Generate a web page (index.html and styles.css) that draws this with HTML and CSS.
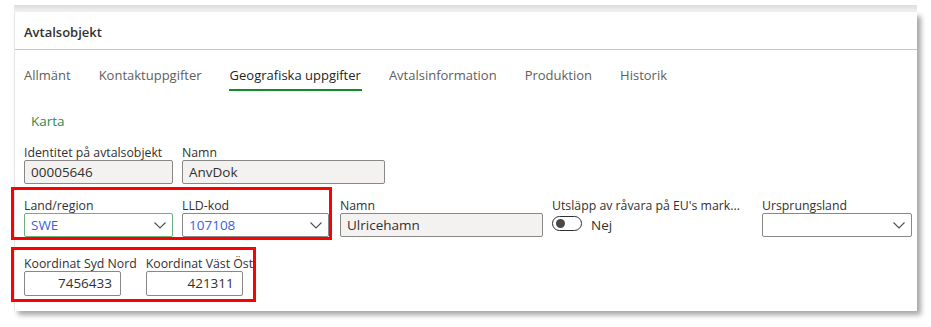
FILE: index.html
```html
<!DOCTYPE html>
<html lang="sv">
<head>
    <meta charset="UTF-8">
    <meta name="viewport" content="width=device-width, initial-scale=1.0">
    <title>Avtalsobjekt</title>
    <link rel="stylesheet" href="styles.css">
</head>
<body>
    <div class="topstrip"></div>

    <!-- Panel: avtalsobjekt -->
    <section class="panel">
        <header class="panel-head">Avtalsobjekt</header>

        <nav class="tabs">
            <a class="tab">Allmänt</a>
            <a class="tab">Kontaktuppgifter</a>
            <a class="tab active">Geografiska uppgifter</a>
            <a class="tab">Avtalsinformation</a>
            <a class="tab">Produktion</a>
            <a class="tab">Historik</a>
        </nav>

        <div class="panel-body">
            <a class="link">Karta</a>

            <div class="row row-1">
                <div class="field">
                    <label>Identitet på avtalsobjekt</label>
                    <div class="box readonly w-149">00005646</div>
                </div>
                <div class="field">
                    <label>Namn</label>
                    <div class="box readonly w-203">AnvDok</div>
                </div>
            </div>

            <div class="row row-2">
                <div class="mark mark-land">
                    <div class="field">
                        <label>Land/region</label>
                        <div class="box select focus w-149 lookup">SWE
                            <svg class="chev" viewBox="0 0 12 7"><polyline points="0.5,0.5 6,6 11.5,0.5"/></svg>
                        </div>
                    </div>
                    <div class="field">
                        <label>LLD-kod</label>
                        <div class="box select w-147 lookup">107108
                            <svg class="chev" viewBox="0 0 12 7"><polyline points="0.5,0.5 6,6 11.5,0.5"/></svg>
                        </div>
                    </div>
                </div>
                <div class="field">
                    <label>Namn</label>
                    <div class="box readonly w-203">Ulricehamn</div>
                </div>
                <div class="field w-201">
                    <label>Utsläpp av råvara på EU's mark...</label>
                    <div class="toggle-line">
                        <span class="toggle"><span class="knob"></span></span>
                        <span class="toggle-text">Nej</span>
                    </div>
                </div>
                <div class="field">
                    <label>Ursprungsland</label>
                    <div class="box select w-150">
                        <svg class="chev" viewBox="0 0 12 7"><polyline points="0.5,0.5 6,6 11.5,0.5"/></svg>
                    </div>
                </div>
            </div>

            <div class="row row-3">
                <div class="mark mark-koord">
                    <div class="field">
                        <label>Koordinat Syd Nord</label>
                        <div class="box num w-97">7456433</div>
                    </div>
                    <div class="field">
                        <label>Koordinat Väst Öst</label>
                        <div class="box num w-97">421311</div>
                    </div>
                </div>
            </div>
        </div>
    </section>
</body>
</html>
```

FILE: styles.css
```css
/* Grund */
body {
    margin: 0;
    background: #fff;
    font-family: "Open Sans", "Noto Sans", sans-serif;
    color: #323130;
    width: 931px;
    height: 327px;
    overflow: hidden;
}

.topstrip {
    margin-left: 14px;
    width: 903px;
    height: 7px;
    margin-top: 5px;
    background: linear-gradient(#dedcda, #f4f3f2);
}

/* Panel */
.panel {
    margin-left: 14px;
    width: 903px;
    height: 299px;
    background: #fff;
    border-left: 1px solid #e6e6e6;
    box-shadow: 4px 4px 5px rgba(0, 0, 0, 0.35);
    box-sizing: border-box;
}

.panel-head {
    height: 38px;
    box-sizing: border-box;
    padding: 11px 0 0 9px;
    font-size: 13px;
    font-weight: 600;
    line-height: 18px;
    border-bottom: 1px solid #c8c6c4;
}

/* Flikar */
.tabs {
    display: flex;
    gap: 27px;
    padding: 15px 0 0 9px;
}

.tab {
    font-size: 13px;
    line-height: 20px;
    color: #605e5c;
    padding: 0 1px 4px;
    border-bottom: 2px solid transparent;
    margin-left: -1px;
}

.tab.active {
    color: #252423;
    border-bottom-color: #138a2a;
}

.panel-body {
    padding: 0 0 0 9px;
}

.link {
    display: block;
    margin: 20px 0 0 7px;
    font-size: 13.5px;
    line-height: 20px;
    color: #2f8a4c;
}

/* Fält */
.row {
    display: flex;
    gap: 9px;
    align-items: flex-start;
}

.row-1 {
    margin-top: 12px;
}

.row-2 {
    margin-top: 3px;
}

.row-2 > .field {
    margin-top: 9px;
}

.row-3 {
    margin-top: 7px;
}

.field {
    display: flex;
    flex-direction: column;
}

.field label {
    font-size: 12.3px;
    line-height: 14px;
    padding-top: 3px;
    white-space: nowrap;
}

.box {
    position: relative;
    box-sizing: border-box;
    height: 24px;
    border: 1px solid #8a8886;
    border-radius: 2px;
    padding: 0 6px;
    font-size: 13.5px;
    line-height: 22px;
    background: #fff;
}

.readonly {
    background: #f3f2f1;
}

.lookup {
    color: #3465d6;
}

.focus {
    border-color: #6cb37b;
}

.num {
    height: 25px;
    text-align: right;
    padding-right: 8px;
}

.w-97 { width: 97px; }
.w-147 { width: 147px; }
.w-149 { width: 149px; }
.w-150 { width: 150px; }
.w-201 { width: 201px; }
.w-203 { width: 203px; }

.chev {
    position: absolute;
    right: 6px;
    top: 8px;
    width: 12px;
    height: 7px;
    fill: none;
    stroke: #505050;
    stroke-width: 1.1;
}

/* Växel */
.toggle-line {
    display: flex;
    align-items: center;
    gap: 9px;
    height: 20px;
    font-size: 13.5px;
}

.toggle-text {
    padding-top: 4px;
}

.toggle {
    display: flex;
    align-items: center;
    box-sizing: border-box;
    width: 30px;
    height: 15px;
    border: 1px solid #323130;
    border-radius: 8px;
    padding-left: 3px;
}

.knob {
    width: 9px;
    height: 9px;
    border-radius: 50%;
    background: #4a4948;
}

/* Röda markeringar */
.mark {
    display: flex;
    gap: 9px;
    border: 3px solid #f00;
    margin-left: -13px;
}

.mark-land {
    padding: 6px 0 0 10px;
    margin-right: -1px;
}

.mark-koord {
    padding: 4px 0 3px 10px;
}
```
